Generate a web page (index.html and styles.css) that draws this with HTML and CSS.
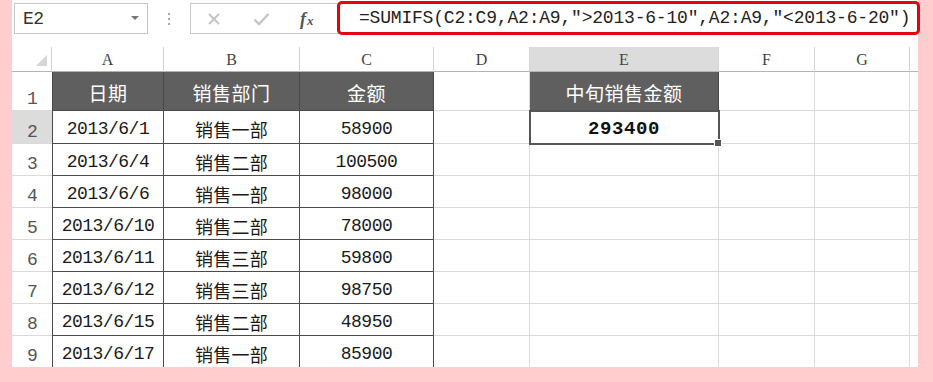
FILE: index.html
```html
<!DOCTYPE html>
<html lang="zh-CN">
<head>
<meta charset="utf-8">
<title>SUMIFS</title>
<link rel="stylesheet" href="styles.css">
</head>
<body>
<div class="panel">
  <div class="toolbar">
    <div class="namebox"><span class="name">E2</span><span class="caret"></span></div>
    <div class="dots"><i></i><i></i><i></i></div>
    <div class="fxbox">
      <svg class="ico" width="14" height="14" viewBox="0 0 14 14"><path d="M2 2 L12 12 M12 2 L2 12" stroke="#c4c4c4" stroke-width="2" fill="none"/></svg>
      <svg class="ico" width="17" height="14" viewBox="0 0 17 14"><path d="M1.5 7.5 L6 12 L15.5 2" stroke="#c4c4c4" stroke-width="2.4" fill="none"/></svg>
      <span class="fx">f<span class="fxx">x</span></span>
    </div>
    <div class="formula">=SUMIFS(C2:C9,A2:A9,″&gt;2013-6-10″,A2:A9,″&lt;2013-6-20″)</div>
  </div>
  <div class="sheet">
    <div class="corner"><span class="tri"></span></div>
    <div class="ch">A</div><div class="ch">B</div><div class="ch">C</div><div class="ch">D</div><div class="ch ch-sel">E</div><div class="ch">F</div><div class="ch">G</div><div class="ch ch-end"></div>

    <div class="rh">1</div>
    <div class="th ta">日期</div><div class="th">销售部门</div><div class="th">金额</div><div class="c"></div><div class="th">中旬销售金额</div><div class="c"></div><div class="c"></div><div class="c end"></div>

    <div class="rh rh-sel">2</div>
    <div class="t ta num">2013/6/1</div><div class="t cjk">销售一部</div><div class="t num">58900</div><div class="c"></div><div class="c sel">293400</div><div class="c"></div><div class="c"></div><div class="c end"></div>

    <div class="rh">3</div>
    <div class="t ta num">2013/6/4</div><div class="t cjk">销售二部</div><div class="t num">100500</div><div class="c"></div><div class="c"></div><div class="c"></div><div class="c"></div><div class="c end"></div>

    <div class="rh">4</div>
    <div class="t ta num">2013/6/6</div><div class="t cjk">销售一部</div><div class="t num">98000</div><div class="c"></div><div class="c"></div><div class="c"></div><div class="c"></div><div class="c end"></div>

    <div class="rh">5</div>
    <div class="t ta num">2013/6/10</div><div class="t cjk">销售二部</div><div class="t num">78000</div><div class="c"></div><div class="c"></div><div class="c"></div><div class="c"></div><div class="c end"></div>

    <div class="rh">6</div>
    <div class="t ta num">2013/6/11</div><div class="t cjk">销售三部</div><div class="t num">59800</div><div class="c"></div><div class="c"></div><div class="c"></div><div class="c"></div><div class="c end"></div>

    <div class="rh">7</div>
    <div class="t ta num">2013/6/12</div><div class="t cjk">销售三部</div><div class="t num">98750</div><div class="c"></div><div class="c"></div><div class="c"></div><div class="c"></div><div class="c end"></div>

    <div class="rh">8</div>
    <div class="t ta num">2013/6/15</div><div class="t cjk">销售二部</div><div class="t num">48950</div><div class="c"></div><div class="c"></div><div class="c"></div><div class="c"></div><div class="c end"></div>

    <div class="rh">9</div>
    <div class="t ta num">2013/6/17</div><div class="t cjk">销售一部</div><div class="t num">85900</div><div class="c"></div><div class="c"></div><div class="c"></div><div class="c"></div><div class="c end"></div>
  </div>
</div>
</body>
</html>
```

FILE: styles.css
```css
html, body {
  margin: 0;
  padding: 0;
}
body {
  width: 933px;
  height: 382px;
  background: #ffcdcd;
  overflow: hidden;
}
.panel {
  margin-left: 12px;
  width: 906px;
  height: 367px;
  background: #ffffff;
  overflow: visible;
  position: relative;
}
.toolbar {
  height: 47px;
  display: flex;
  align-items: flex-start;
  padding-left: 2px;
  box-sizing: border-box;
}
.namebox {
  margin-top: 3px;
  width: 134px;
  height: 31px;
  box-sizing: border-box;
  border: 1px solid #c6c6c6;
  display: flex;
  align-items: center;
  justify-content: space-between;
  padding: 0 8px 0 8px;
}
.name {
  font-family: "Liberation Mono", "DejaVu Sans Mono", monospace;
  font-size: 18px;
  color: #333;
  letter-spacing: -0.5px;
}
.caret {
  width: 0;
  height: 0;
  border-left: 4px solid transparent;
  border-right: 4px solid transparent;
  border-top: 4px solid #777;
  margin-top: -2px;
}
.dots {
  width: 42px;
  height: 37px;
  display: flex;
  flex-direction: column;
  align-items: center;
  justify-content: center;
  gap: 3px;
}
.dots i {
  display: block;
  width: 2px;
  height: 2px;
  background: #a8a8a8;
}
.fxbox {
  margin-top: 3px;
  width: 149px;
  height: 31px;
  box-sizing: border-box;
  border: 1px solid #c6c6c6;
  display: flex;
  align-items: center;
  padding-left: 16px;
}
.ico {
  display: block;
}
.ico + .ico {
  margin-left: 32px;
}
.fx {
  margin-left: 30px;
  font-family: "Liberation Serif", "DejaVu Serif", serif;
  font-style: italic;
  font-weight: bold;
  font-size: 18px;
  color: #555;
  line-height: 1;
}
.fxx {
  font-size: 13px;
  margin-left: 1px;
}
.formula {
  margin-top: 1px;
  margin-left: -2px;
  margin-right: -2px;
  flex: 1;
  height: 34px;
  box-sizing: border-box;
  border: 3px solid #e60012;
  border-radius: 5px;
  display: flex;
  align-items: center;
  padding-left: 19px;
  font-family: "Liberation Mono", "DejaVu Sans Mono", monospace;
  font-size: 18px;
  letter-spacing: -0.2px;
  color: #222;
  white-space: nowrap;
  overflow: hidden;
  background: #fff;
}
.sheet {
  display: grid;
  grid-template-columns: 40px 112px 136px 134px 96px 189px 96px 95px 8px;
  grid-template-rows: 25px 39px 33px repeat(7, 32px);
  height: 320px;
  overflow: hidden;
}
.sheet > div {
  box-sizing: border-box;
  display: flex;
  align-items: center;
  justify-content: center;
}
.corner {
  border-right: 1px solid #d4d4d4;
  border-bottom: 1px solid #b4b4b4;
  position: relative;
}
.tri {
  position: absolute;
  right: 4px;
  bottom: 5px;
  width: 0;
  height: 0;
  border-left: 11px solid transparent;
  border-bottom: 11px solid #d6d6d6;
}
.ch {
  border-right: 1px solid #d4d4d4;
  border-bottom: 1px solid #b4b4b4;
  font-family: "Liberation Serif", "DejaVu Serif", serif;
  font-size: 16px;
  color: #444;
  align-items: flex-end !important;
  padding-bottom: 2px;
}
.ch-sel {
  background: #dcdcdc;
}
.ch-end {
  border-right: none;
}
.rh {
  border-bottom: 1px solid #dadada;
  font-family: "Liberation Mono", "DejaVu Sans Mono", monospace;
  font-size: 18px;
  color: #555;
  line-height: 1;
  align-items: flex-end !important;
  padding-bottom: 2px;
  padding-left: 1px;
}
.rh-sel {
  background: #dcdcdc;
}
.c {
  border-right: 1px solid #dadada;
  border-bottom: 1px solid #dadada;
}
.c.end {
  border-right: none;
}
.th {
  background: #5f5f5f;
  color: #ffffff;
  border-right: 1px solid #4a4a4a;
  border-bottom: 1px solid #4a4a4a;
  font-family: "Noto Sans CJK SC", "Noto Sans", sans-serif;
  font-size: 19px;
  letter-spacing: 0.5px;
  padding-top: 3px;
}
.t {
  border-right: 1px solid #4a4a4a;
  border-bottom: 1px solid #4a4a4a;
  color: #1a1a1a;
  padding-top: 4px;
}
.ta {
  border-left: 1px solid #4a4a4a;
}
.num {
  font-family: "Liberation Mono", "DejaVu Sans Mono", monospace;
  font-size: 18px;
  letter-spacing: -0.5px;
}
.cjk {
  font-family: "Noto Sans CJK SC", sans-serif;
  font-size: 18px;
  letter-spacing: 0.3px;
}
.sel {
  position: relative;
  outline: 2px solid #555;
  outline-offset: -1px;
  font-family: "Liberation Mono", "DejaVu Sans Mono", monospace;
  font-weight: bold;
  font-size: 19px;
  letter-spacing: 0.6px;
  color: #111;
  padding-top: 4px;
}
.sel::after {
  content: "";
  position: absolute;
  right: -4px;
  bottom: -4px;
  width: 6px;
  height: 6px;
  background: #555;
  border: 1px solid #fff;
}
```
